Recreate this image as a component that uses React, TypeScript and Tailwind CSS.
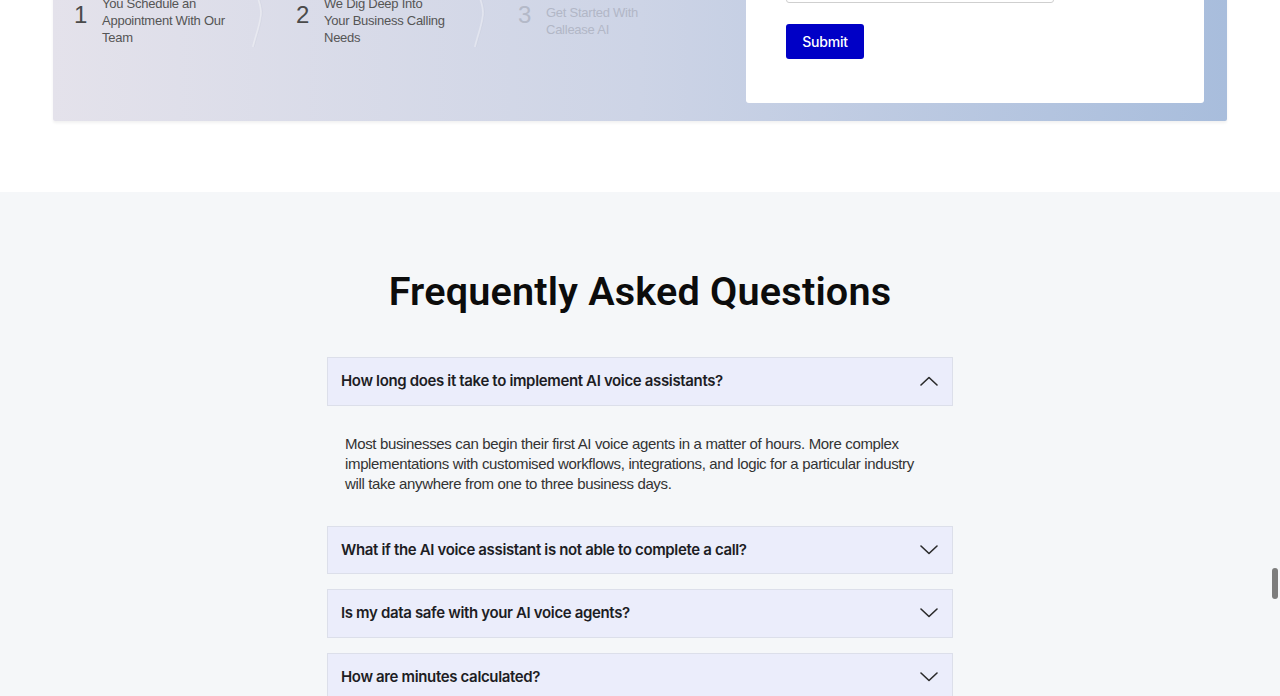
import React from "react";

const steps = [
  { n: "1", lines: ["You Schedule an", "Appointment With Our", "Team"], faded: false },
  { n: "2", lines: ["We Dig Deep Into", "Your Business Calling", "Needs"], faded: false },
  { n: "3", lines: ["Get Started With", "Callease AI"], faded: true },
];

const faqs = [
  {
    q: "How long does it take to implement AI voice assistants?",
    a: "Most businesses can begin their first AI voice agents in a matter of hours. More complex implementations with customised workflows, integrations, and logic for a particular industry will take anywhere from one to three business days.",
    open: true,
  },
  { q: "What if the AI voice assistant is not able to complete a call?", a: "", open: false },
  { q: "Is my data safe with your AI voice agents?", a: "", open: false },
  { q: "How are minutes calculated?", a: "", open: false },
];

function Separator() {
  return (
    <svg width="14" height="64" viewBox="0 0 14 64" className="shrink-0 -mt-[12px]" fill="none">
      <path d="M2 0 C 8 14, 12 24, 11 32 C 10 42, 6 52, 3 64" stroke="#ffffff" strokeOpacity="0.35" strokeWidth="2" />
      <path d="M3 0 C 9 14, 13 24, 12 32 C 11 42, 7 52, 4 64" stroke="#aeb4c6" strokeOpacity="0.18" strokeWidth="1" />
    </svg>
  );
}

function Chevron({ up }: { up: boolean }) {
  return (
    <svg width="18" height="10" viewBox="0 0 18 10" fill="none" className="shrink-0">
      <path
        d={up ? "M1 9 L9 1.5 L17 9" : "M1 1 L9 8.5 L17 1"}
        stroke="#2a2a2a"
        strokeWidth="1.6"
        strokeLinecap="round"
        strokeLinejoin="round"
      />
    </svg>
  );
}

export default function App() {
  return (
    <div className="w-[1280px] min-h-[696px] bg-white relative overflow-hidden">
      {/* top contact band, scrolled partially out of view */}
      <div className="h-[192px] overflow-hidden flex flex-col justify-end pb-[71px] bg-white">
        <div className="mx-[53px] flex items-end justify-between bg-gradient-to-r from-[#e4e2eb] via-[#cdd4e6] to-[#a8bddc] shadow-[0_2px_3px_rgba(0,0,0,0.06)] pr-[23px] pb-[18px] pt-[40px] rounded-[2px]">
          <div className="flex pl-[19px] pb-[57px] font-['Liberation_Sans',Arial,sans-serif]">
            {steps.map((s, i) => (
              <div key={s.n} className="flex w-[222px] h-[51px]">
                <div
                  className={`w-[30px] shrink-0 pl-[2px] text-[24px] leading-[24px] mt-[8px] ${s.faded ? "text-[#b4b9c8]" : "text-[#4a4a4a]"}`}
                >
                  {s.n}
                </div>
                <div
                  className={`w-[140px] shrink-0 self-center text-[13px] leading-[17px] tracking-[-0.25px] ${s.faded ? "text-[#b2b7c6]" : "text-[#555555]"}`}
                >
                  {s.lines.map((l) => (
                    <div key={l}>{l}</div>
                  ))}
                </div>
                {i < 2 && (
                  <div className="ml-[8px]">
                    <Separator />
                  </div>
                )}
              </div>
            ))}
          </div>

          <div className="w-[458px] bg-white rounded-[3px] px-[40px] pt-[20px] pb-[44px] font-['Inter',sans-serif]">
            <label className="block text-[14px] text-[#333] mb-[6px]">Phone Number</label>
            <div className="w-[268px] h-[40px] border border-[#cfcfcf] rounded-[3px] bg-white" />
            <button className="mt-[21px] w-[78px] h-[35px] bg-[#0000c6] rounded-[3px] text-white text-[14px] font-medium tracking-[-0.2px]">
              Submit
            </button>
          </div>
        </div>
      </div>

      {/* FAQ section */}
      <div className="bg-[#f5f7f9] pt-[76px] pb-[60px]">
        <h2 className="text-center font-['Roboto',sans-serif] font-semibold text-[39.6px] leading-[48px] text-[#0c0c0c] tracking-[0.2px]">
          Frequently Asked Questions
        </h2>
        <div className="w-[626px] mx-auto mt-[41px] flex flex-col gap-[15px]">
          {faqs.map((f) => (
            <div key={f.q}>
              <div className="h-[48.5px] flex items-center justify-between bg-[#ebedfb] border border-[#dcdfea] pl-[13px] pr-[14px]">
                <span className="font-['Inter',sans-serif] font-semibold text-[15px] tracking-[-0.35px] text-[#1d1d24]">{f.q}</span>
                <Chevron up={f.open} />
              </div>
              {f.open && (
                <div className="pt-[28px] pb-[17px] pl-[18px] pr-[30px] font-['Liberation_Sans',Arial,sans-serif] text-[15px] leading-[20px] tracking-[-0.35px] text-[#333333]">
                  {f.a}
                </div>
              )}
            </div>
          ))}
        </div>
      </div>

      {/* overlay scrollbar thumb */}
      <div className="absolute left-[1272px] top-[568px] w-[6px] h-[31px] rounded-full bg-[#7d7d7d]" />
    </div>
  );
}
